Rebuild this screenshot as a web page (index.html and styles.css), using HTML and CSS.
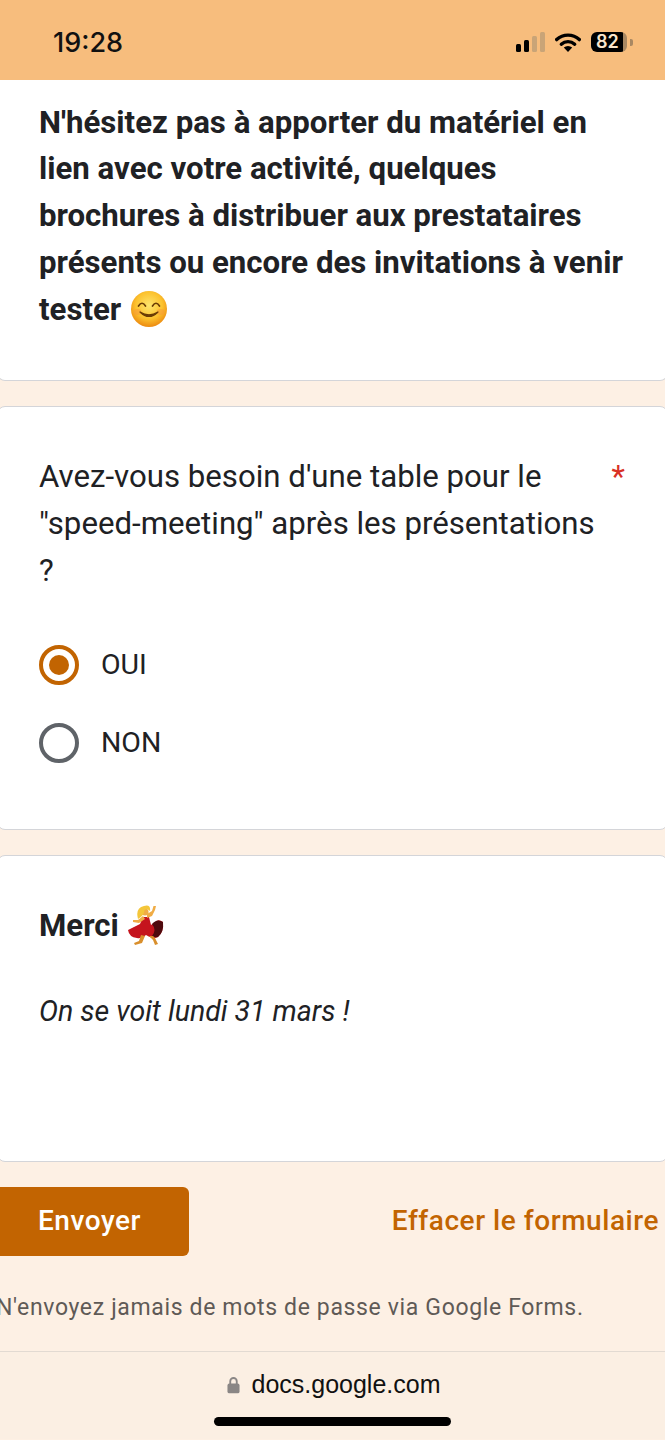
FILE: index.html
```html
<!DOCTYPE html>
<html lang="fr">
<head>
    <meta charset="UTF-8">
    <meta name="viewport" content="width=device-width, initial-scale=1.0">
    <title>Google Forms</title>
    <link rel="stylesheet" href="styles.css">
</head>
<body>
    <header class="status-bar">
        <span class="time">19:28</span>
        <div class="status-icons">
            <div class="signal">
                <span class="bar bar-1"></span>
                <span class="bar bar-2"></span>
                <span class="bar bar-3 off"></span>
                <span class="bar bar-4 off"></span>
            </div>
            <svg class="wifi" viewBox="0 0 26 19" width="26" height="19">
                <path d="M1.7 6.6 A16.5 16.5 0 0 1 24.3 6.6" fill="none" stroke="#000" stroke-width="3.4" stroke-linecap="round"/>
                <path d="M6.3 11.2 A10 10 0 0 1 19.7 11.2" fill="none" stroke="#000" stroke-width="3.4" stroke-linecap="round"/>
                <path d="M8.8 14.6 L13 19 L17.2 14.6 A6 6 0 0 0 8.8 14.6 Z" fill="#000"/>
            </svg>
            <div class="battery"><span>82</span></div>
            <span class="battery-cap"></span>
        </div>
    </header>

    <main class="form">
        <section class="card card-intro">
            <p class="strong-text">N'hésitez pas à apporter du matériel en lien avec votre activité, quelques brochures à distribuer aux prestataires présents ou encore des invitations à venir tester
                <svg class="emoji" viewBox="0 0 36 36" width="36" height="36">
                    <defs>
                        <radialGradient id="face" cx="50%" cy="40%" r="60%">
                            <stop offset="0%" stop-color="#fde56e"/>
                            <stop offset="62%" stop-color="#fcc22e"/>
                            <stop offset="100%" stop-color="#ec8a10"/>
                        </radialGradient>
                    </defs>
                    <circle cx="18" cy="18" r="18" fill="url(#face)"/>
                    <ellipse cx="6.5" cy="21" rx="4" ry="3" fill="#f79a3a" opacity="0.55"/>
                    <ellipse cx="29.5" cy="21" rx="4" ry="3" fill="#f79a3a" opacity="0.55"/>
                    <path d="M7.5 15 Q11 9.5 14.5 15" fill="none" stroke="#6b3d05" stroke-width="1.7" stroke-linecap="round"/>
                    <path d="M21.5 15 Q25 9.5 28.5 15" fill="none" stroke="#6b3d05" stroke-width="1.7" stroke-linecap="round"/>
                    <path d="M9 21 Q18 30 27 21 Q18 26.5 9 21 Z" fill="#7a4306" stroke="#6b3d05" stroke-width="1.2" stroke-linejoin="round"/>
                </svg>
            </p>
        </section>

        <section class="card card-question">
            <div class="question">
                <p class="question-text">Avez-vous besoin d'une table pour le "speed-meeting" après les présentations ?</p>
                <span class="required">*</span>
            </div>
            <div class="options">
                <div class="option">
                    <span class="radio checked"></span>
                    <span>OUI</span>
                </div>
                <div class="option">
                    <span class="radio"></span>
                    <span>NON</span>
                </div>
            </div>
        </section>

        <section class="card card-thanks">
            <h2 class="strong-text thanks-title">Merci
                <svg class="emoji dancer" viewBox="0 0 38 40" width="38" height="40">
                    <path d="M16 12 L13 19 L7 22 L1 25 Q2 32 10 33 Q15 34 19 30 Q26 35 31 32 Q37 27 36 17 Q31 13 27 18 L24 20 L22 12 Z" fill="#c5141d"/>
                    <path d="M25 19 Q30 13 36 17 Q37 27 31 32 Q28 33 25 31 Q30 25 25 19 Z" fill="#4f0a0e"/>
                    <path d="M14 30 L12 36 L7 38 L8 40 L15 38 L18 31 Z" fill="#d98f2c"/>
                    <path d="M22 31 L26 35 L28 40 L31 39 L28 33 L26 31 Z" fill="#d98f2c"/>
                    <path d="M20 13 L25 11 L28 5 L29 1 L26.5 1 L25 6 L20 9 Z" fill="#f0ac45"/>
                    <path d="M16 11 L11 15 L6 15 L6 17 L12 18 L18 14 Z" fill="#f0ac45"/>
                    <circle cx="18" cy="7" r="3.6" fill="#f0ac45"/>
                    <path d="M11 14 Q8 3 17 1 Q24 -1 23 6 Q20 3 17.5 5 Q17 11 11 14 Z" fill="#f4c63a"/>
                </svg>
            </h2>
            <p class="note">On se voit lundi 31 mars !</p>
        </section>

        <div class="actions">
            <button class="submit">Envoyer</button>
            <a class="clear">Effacer le formulaire</a>
        </div>
        <p class="warning">N'envoyez jamais de mots de passe via Google Forms.</p>
    </main>

    <footer class="browser-bar">
        <div class="url">
            <svg class="lock" viewBox="0 0 14 19" width="13" height="18">
                <path d="M3.5 9 V5.5 A3.5 3.5 0 0 1 10.5 5.5 V9" fill="none" stroke="#8a8685" stroke-width="2"/>
                <rect x="0.5" y="8" width="13" height="10.5" rx="2" fill="#8a8685"/>
            </svg>
            <span>docs.google.com</span>
        </div>
        <div class="home-indicator"></div>
    </footer>
</body>
</html>
```

FILE: styles.css
```css
* {
    box-sizing: border-box;
}
html, body {
    margin: 0;
    height: 1440px;
    overflow: hidden;
}
body {
    width: 665px;
    font-family: Roboto, "Liberation Sans", sans-serif;
    color: #202124;
    background: #fdf0e4;
}
p, h2 {
    margin: 0;
}

/* status bar */
.status-bar {
    height: 80px;
    background: #f7bd7d;
    display: flex;
    align-items: center;
    justify-content: space-between;
    padding: 4px 32px 0 53px;
}
.time {
    font-family: Inter, sans-serif;
    font-size: 27px;
    font-weight: 500;
    color: #111;
}
.status-icons {
    display: flex;
    align-items: center;
}
.signal {
    display: flex;
    align-items: flex-end;
    gap: 3px;
    height: 20px;
    margin-right: 10px;
}
.bar {
    width: 5px;
    background: #000;
    border-radius: 1.5px;
}
.bar.off {
    background: #c9a477;
}
.bar-1 { height: 8px; }
.bar-2 { height: 12px; }
.bar-3 { height: 16px; }
.bar-4 { height: 20px; }
.wifi {
    margin-right: 10px;
}
.battery {
    width: 36px;
    height: 20px;
    border-radius: 6px;
    background: linear-gradient(to right, #000 0 89%, #a98862 89%);
    display: flex;
    align-items: center;
    padding-left: 5px;
}
.battery span {
    font-family: Inter, sans-serif;
    font-size: 18px;
    font-weight: 600;
    color: #fbe6cc;
    line-height: 1;
}
.battery-cap {
    width: 3px;
    height: 7px;
    margin-left: 3px;
    background: #a98862;
    border-radius: 0 2px 2px 0;
}

/* form cards */
.form {
    height: 1271px;
}
.card {
    margin: 0 -3px 25px;
    padding: 47px 41px 48px;
    background: #fff;
    border: 1px solid #d4d5d9;
    border-radius: 8px;
    font-size: 31.2px;
    line-height: 46.8px;
}
.card-intro {
    height: 301px;
    padding-top: 19.6px;
    border-top: 0;
    border-radius: 0 0 8px 8px;
}
.card-question {
    height: 424px;
}
.card-thanks {
    height: 307px;
}
.strong-text {
    font-size: 31.2px;
    line-height: 46.8px;
    font-weight: 700;
}
.emoji {
    vertical-align: -7px;
    margin-left: 2px;
}
.dancer {
    vertical-align: -9px;
    margin-left: 0;
}
.question {
    display: flex;
    justify-content: space-between;
}
.question-text {
    width: 565px;
}
.required {
    color: #d93025;
    margin-right: 1px;
}
.options {
    margin-top: 32px;
}
.option {
    height: 78px;
    display: flex;
    align-items: center;
    gap: 22px;
    font-size: 28.5px;
}
.radio {
    width: 40px;
    height: 40px;
    border: 4px solid #5f6368;
    border-radius: 50%;
    display: flex;
    align-items: center;
    justify-content: center;
}
.radio.checked {
    border-color: #c26401;
}
.radio.checked::after {
    content: "";
    width: 20px;
    height: 20px;
    border-radius: 50%;
    background: #c26401;
}
.thanks-title {
    margin-bottom: 39px;
}
.note {
    font-style: italic;
    font-size: 28.5px;
}

/* buttons and footer of the form */
.actions {
    display: flex;
    align-items: center;
    justify-content: space-between;
    margin-right: 6px;
}
.submit {
    width: 199px;
    height: 69px;
    margin-left: -10px;
    padding: 0 0 3px 0;
    border: 0;
    border-radius: 6px;
    background: #c26401;
    color: #fff;
    font-family: Roboto, sans-serif;
    font-size: 28px;
    font-weight: 500;
    letter-spacing: 0.55px;
}
.clear {
    color: #c26401;
    font-size: 28px;
    font-weight: 500;
    letter-spacing: 0.55px;
    padding-bottom: 3px;
}
.warning {
    margin: 36px 0 0 -4px;
    font-size: 23px;
    line-height: 32px;
    letter-spacing: 0.65px;
    color: #5f5a56;
    white-space: nowrap;
}

/* browser bar */
.browser-bar {
    height: 88px;
    border-top: 1px solid #e2dad2;
    background: #fbefe3;
    display: flex;
    flex-direction: column;
    align-items: center;
}
.url {
    display: flex;
    align-items: center;
    gap: 11px;
    height: 65px;
    font-family: "Liberation Sans", sans-serif;
    font-size: 25px;
    color: #111;
    margin-left: 3px;
}
.home-indicator {
    width: 237px;
    height: 9px;
    border-radius: 5px;
    background: #000;
}
```
